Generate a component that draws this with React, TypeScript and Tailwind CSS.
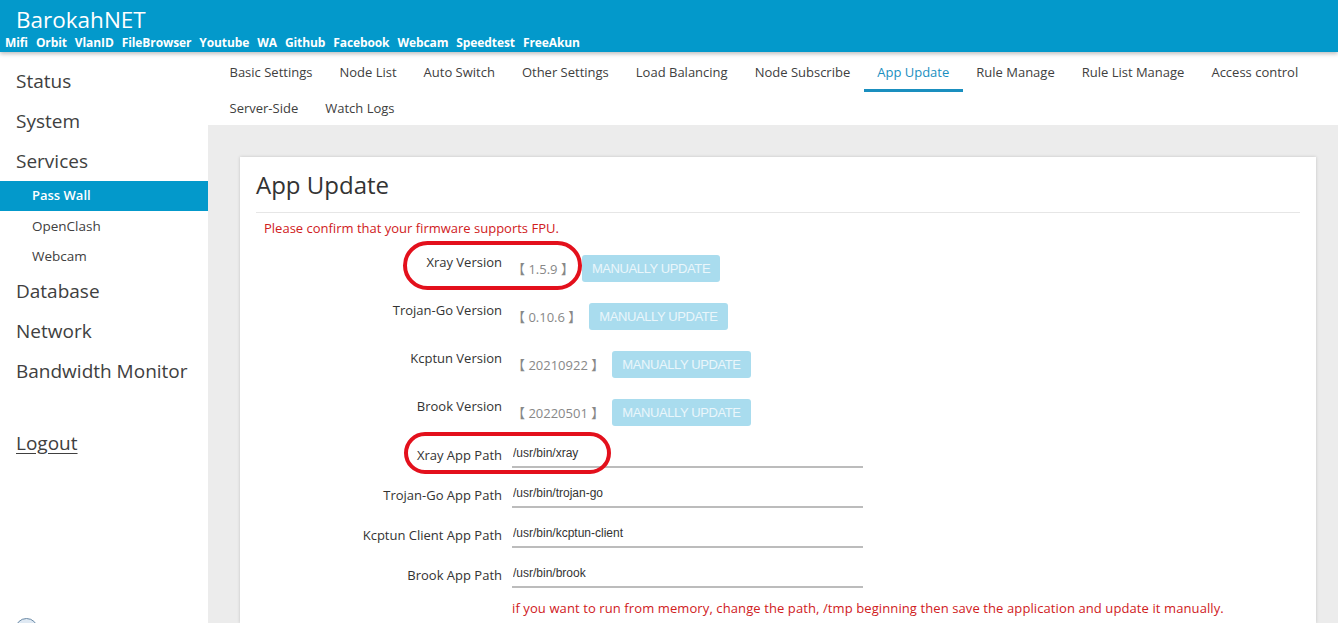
import React from "react";

const links = ["Mifi", "Orbit", "VlanID", "FileBrowser", "Youtube", "WA", "Github", "Facebook", "Webcam", "Speedtest", "FreeAkun"];
const tabs = [
  "Basic Settings", "Node List", "Auto Switch", "Other Settings", "Load Balancing", "Node Subscribe",
  "App Update", "Rule Manage", "Rule List Manage", "Access control", "Server-Side", "Watch Logs",
];
const versions = [
  { label: "Xray Version", value: "1.5.9" },
  { label: "Trojan-Go Version", value: "0.10.6" },
  { label: "Kcptun Version", value: "20210922" },
  { label: "Brook Version", value: "20220501" },
];
const paths = [
  { label: "Xray App Path", value: "/usr/bin/xray" },
  { label: "Trojan-Go App Path", value: "/usr/bin/trojan-go" },
  { label: "Kcptun Client App Path", value: "/usr/bin/kcptun-client" },
  { label: "Brook App Path", value: "/usr/bin/brook" },
];

export default function App() {
  return (
    <div
      className="relative h-[623px] w-[1338px] overflow-hidden flex flex-col bg-[#ececec] text-[#333]"
      style={{ fontFamily: '"Open Sans", "Noto Sans", sans-serif' }}
    >
      <header className="h-[52px] shrink-0 bg-[#0399cb] text-white shadow-[0_2px_4px_rgba(0,0,0,0.25)] z-10">
        <div className="pl-[16px] pt-[5px] text-[22.5px] leading-[30px]">BarokahNET</div>
        <div className="pl-[5px] flex gap-[8px] text-[12px] font-bold leading-[16px] tracking-[-0.1px]">
          {links.map((l) => (
            <span key={l}>{l}</span>
          ))}
        </div>
      </header>
      <div className="flex flex-1 min-h-0">
        <aside className="w-[208px] shrink-0 overflow-hidden bg-white pt-[9px] text-[#404040] flex flex-col">
          {["Status", "System", "Services"].map((s) => (
            <div key={s} className="h-[40px] shrink-0 flex items-center pl-[16px] text-[19px]">{s}</div>
          ))}
          <div className="h-[30px] shrink-0 flex items-center pl-[32px] text-[13px] font-semibold bg-[#0399cb] text-white">Pass Wall</div>
          {["OpenClash", "Webcam"].map((s) => (
            <div key={s} className="h-[30px] shrink-0 flex items-center pl-[32px] text-[13.5px]">{s}</div>
          ))}
          {["Database", "Network", "Bandwidth Monitor"].map((s) => (
            <div key={s} className="h-[40px] shrink-0 flex items-center pl-[16px] text-[19px]">{s}</div>
          ))}
          <div className="mt-[32px] h-[40px] shrink-0 flex items-center pl-[16px] text-[19px] underline underline-offset-[3px]">Logout</div>
          <div className="mt-[155px] ml-[15px] w-[23px] h-[23px] shrink-0 rounded-full border border-[#6b8aa6] bg-[#dfe9f3]" />
        </aside>
        <main className="flex-1 flex flex-col min-w-0">
          <nav className="h-[73px] shrink-0 overflow-hidden bg-white pl-[8px] pt-[4px] flex flex-wrap content-start text-[13px] text-[#404040]">
            {tabs.map((t) => (
              <div
                key={t}
                className={
                  t === "App Update"
                    ? "h-[36px] px-[13.5px] flex items-center border-b-[3px] border-[#1a8fbf] text-[#1a8fbf]"
                    : "h-[36px] px-[13.5px] flex items-center border-b-[3px] border-transparent"
                }
              >
                {t}
              </div>
            ))}
          </nav>
          <div className="ml-[32px] mr-[22px] mt-[32px] flex-1 bg-white shadow-[0_0_3px_rgba(0,0,0,0.18)] px-[16px] pt-[12px]">
            <h2 className="text-[24px] leading-[32px] text-[#333]">App Update</h2>
            <div className="mt-[11px] border-t border-[#e6e6e6]" />
            <div className="mt-[5px] pl-[8px] text-[13px] leading-[20px] text-[#d0201c]">
              Please confirm that your firmware supports FPU.
            </div>
            <div className="mt-[7px]">
              {versions.map((v) => (
                <div key={v.label} className="h-[48px] flex items-start">
                  <div className="w-[246px] text-right pt-[7px] text-[13px] leading-[20px]">{v.label}</div>
                  <div
                    className="ml-[10px] pt-[14px] text-[13px] leading-[20px] text-[#888]"
                    style={{ fontFamily: '"Open Sans", "Noto Sans CJK SC", sans-serif' }}
                  >
                    【 {v.value} 】
                  </div>
                  <div
                    className="ml-[8px] mt-[10px] h-[27px] px-[10px] flex items-center rounded-[3px] bg-[#a9dcee] text-[#eaf6fb] text-[13px] tracking-[-0.4px]"
                    style={{ fontFamily: '"Liberation Sans", Arial, sans-serif' }}
                  >
                    MANUALLY UPDATE
                  </div>
                </div>
              ))}
              {paths.map((p) => (
                <div key={p.label} className="h-[40px] flex items-start">
                  <div className="w-[246px] text-right pt-[8px] text-[13px] leading-[20px]">{p.label}</div>
                  <input
                    readOnly
                    value={p.value}
                    className="ml-[10px] mt-[1px] w-[351px] h-[30px] pl-[1px] pt-[1px] border-b-2 border-[#bcbcbc] text-[12px] text-[#333] outline-none bg-transparent"
                    style={{ fontFamily: '"Liberation Sans", Arial, sans-serif' }}
                  />
                </div>
              ))}
              <div className="ml-[256px] mt-[1px] text-[13px] leading-[20px] text-[#d0201c] whitespace-nowrap tracking-[0.1px]">
                if you want to run from memory, change the path, /tmp beginning then save the application and update it manually.
              </div>
            </div>
          </div>
        </main>
      </div>
      <div className="absolute left-[403px] top-[241px] w-[179px] h-[49px] rounded-[26px] border-[4px] border-[#e3101c]" />
      <div className="absolute left-[404px] top-[432px] w-[207px] h-[42px] rounded-[22px] border-[4px] border-[#e3101c]" />
    </div>
  );
}
